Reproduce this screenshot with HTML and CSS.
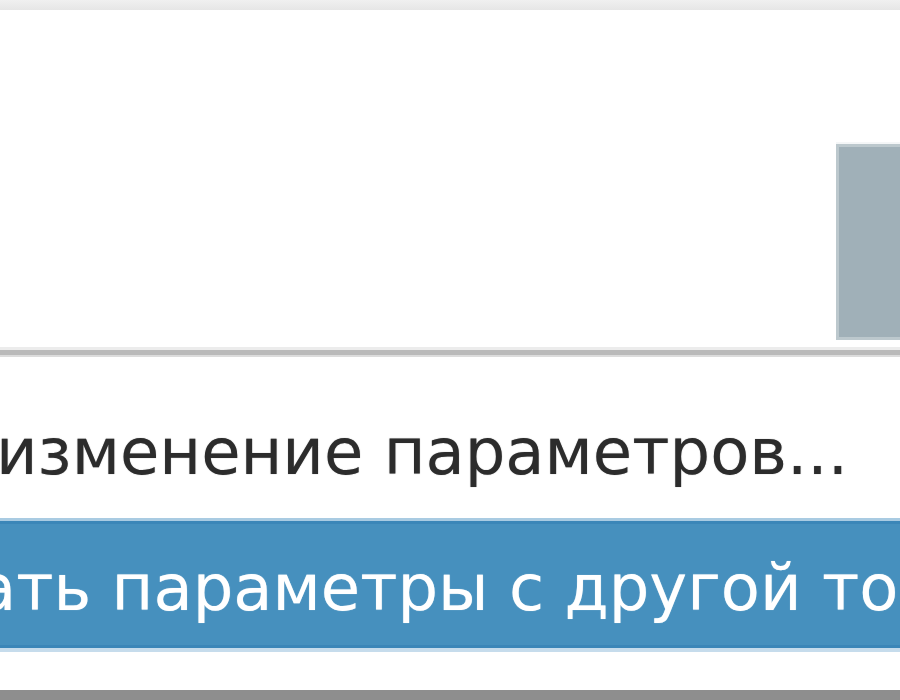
FILE: index.html
```html
<!DOCTYPE html>
<html lang="ru">
<head>
<meta charset="utf-8">
<link rel="stylesheet" href="styles.css">
</head>
<body>
<div class="page">
  <div class="topbar"></div>
  <div class="upper">
    <div class="upper-space"></div>
    <div class="thumb"></div>
  </div>
  <div class="divider"></div>
  <div class="status">
    <span class="status-text">изменение параметров...</span>
  </div>
  <div class="action">
    <span class="action-text">ать параметры с другой точки</span>
  </div>
  <div class="spacer"></div>
  <div class="footer"></div>
</div>
</body>
</html>
```
FILE: styles.css
```css
html, body {
  margin: 0;
  padding: 0;
  background: #ffffff;
}
.page {
  width: 900px;
  height: 700px;
  overflow: hidden;
  display: flex;
  flex-direction: column;
  font-family: "DejaVu Sans", Verdana, sans-serif;
}
.topbar {
  height: 10px;
  flex: none;
  background: linear-gradient(#f0f0f0, #e6e6e6);
}
.upper {
  height: 337px;
  flex: none;
  display: flex;
  background: #ffffff;
}
.upper-space {
  flex: 1;
}
.thumb {
  width: 61px;
  height: 190px;
  margin-top: 134px;
  background: #a0b0b8;
  border: 3px solid #bcc8cd;
  border-right: none;
  box-shadow: 0 -2px 0 #f4f6f7;
}
.divider {
  height: 10px;
  flex: none;
  box-sizing: border-box;
  border-top: 3px solid #ececec;
  border-bottom: 2px solid #dcdcdc;
  background: #bababa;
}
.status {
  height: 161px;
  flex: none;
  display: flex;
  align-items: flex-end;
  box-sizing: border-box;
  padding-bottom: 34px;
  overflow: hidden;
}
.status-text {
  font-size: 64px;
  line-height: 1;
  color: #2c2c2c;
  margin-left: -4px;
  white-space: nowrap;
  text-shadow: 0 0 1px rgba(40, 40, 40, 0.5);
}
.action {
  height: 134px;
  flex: none;
  box-sizing: border-box;
  background: #4690be;
  border-top: 3px solid #a9cbe2;
  border-bottom: 4px solid #c6dcec;
  box-shadow: inset 0 3px 0 #3b86b8, inset 0 -3px 0 #3b86b8;
  display: flex;
  align-items: center;
  padding-top: 6px;
  white-space: nowrap;
  overflow: hidden;
}
.action-text {
  font-size: 64px;
  line-height: 1;
  color: #ffffff;
  margin-left: -23px;
  text-shadow: 0 0 1px rgba(255, 255, 255, 0.6);
}
.spacer {
  flex: 1;
}
.footer {
  height: 10px;
  flex: none;
  background: #8e8e8e;
}
```
